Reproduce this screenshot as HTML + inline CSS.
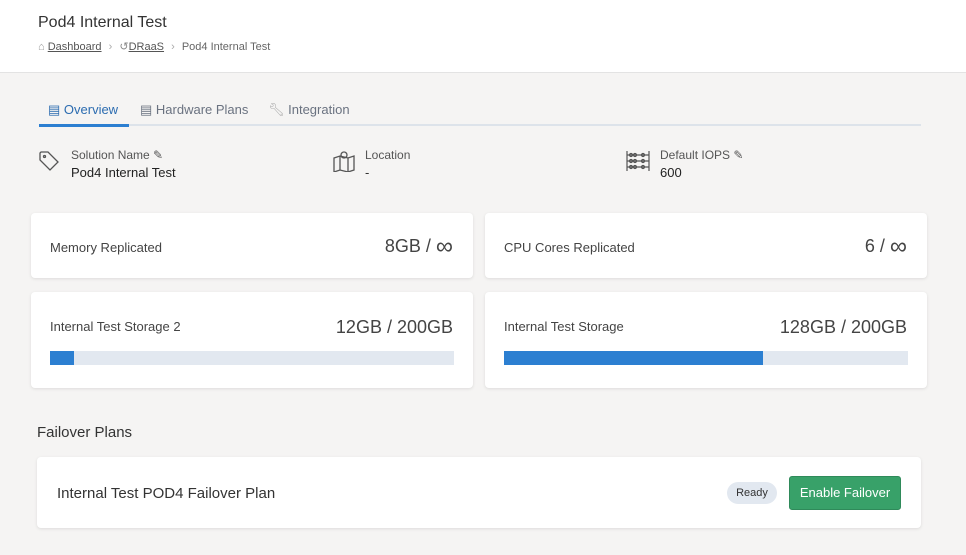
<!DOCTYPE html>
<html><head><style>
*{box-sizing:border-box;margin:0;padding:0}
body{width:966px;height:555px;background:#f5f4f3;font-family:"Liberation Sans",sans-serif;color:#333;position:relative;overflow:hidden}
.hdr{position:absolute;left:0;top:0;width:966px;height:73px;background:#fff;border-bottom:1px solid #e3e3e3}
.abs{position:absolute}
.card{position:absolute;background:#fff;border-radius:4px;box-shadow:0 1px 3px rgba(0,0,0,.1)}
.lbl{font-size:13px;color:#444}
.big{font-size:18px;color:#444;position:absolute;right:20px}
.inf{font-size:24px;line-height:18px;vertical-align:-2px}
.bar{position:absolute;left:19px;right:19px;height:14px;background:#e2e8f0}
.bar div{height:100%;background:#2c7fd1}
.sm{font-size:12px;color:#555}
</style></head><body>
<div class="hdr">
<div class="abs" style="left:38px;top:14px;font-size:16px;color:#333">Pod4 Internal Test</div>
<div class="abs" style="left:38px;top:40px;font-size:11px;color:#666;white-space:nowrap">
<span style="color:#999">⌂</span> <u style="color:#555">Dashboard</u> <span style="color:#aaa;margin:0 4px">›</span> <span style="color:#888">↺</span><u style="color:#555">DRaaS</u> <span style="color:#aaa;margin:0 4px">›</span> Pod4 Internal Test</div>
</div>
<div class="abs" style="left:39px;top:124px;width:882px;height:2px;background:#dde3ea"></div>
<div class="abs" style="left:39px;top:124px;width:90px;height:3px;background:#2c7fd1"></div>
<div class="abs" style="left:48px;top:102px;font-size:13px;color:#2c6cb0;white-space:nowrap">▤ Overview</div>
<div class="abs" style="left:140px;top:102px;font-size:13px;color:#6a7280;white-space:nowrap">▤ Hardware Plans</div>
<div class="abs" style="left:268px;top:102px;font-size:13px;color:#6a7280;white-space:nowrap"><span style="color:#aaa">🔧︎</span> Integration</div>

<svg class="abs" style="left:38px;top:150px" width="22" height="22" viewBox="0 0 22 22" fill="none" stroke="#555" stroke-width="1.3"><path d="M2 3v7l10 10 8-8L10 2H3z"/><circle cx="6.5" cy="6.5" r="1"/></svg>
<div class="abs sm" style="left:71px;top:148px">Solution Name ✎</div>
<div class="abs" style="left:71px;top:165px;font-size:13px;color:#222">Pod4 Internal Test</div>
<svg class="abs" style="left:332px;top:150px" width="24" height="22" viewBox="0 0 24 22" fill="none" stroke="#555" stroke-width="1.3"><path d="M2 8l6-2 8 2 6-2v14l-6 2-8-2-6 2z M8 6v14 M16 8v14"/><circle cx="12" cy="5" r="3"/></svg>
<div class="abs sm" style="left:365px;top:148px">Location</div>
<div class="abs" style="left:365px;top:165px;font-size:13px">-</div>
<svg class="abs" style="left:626px;top:150px" width="24" height="22" viewBox="0 0 24 22" fill="none" stroke="#555" stroke-width="1.2"><path d="M1 1v20M23 1v20M1 5h22M1 11h22M1 17h22"/><circle cx="5" cy="5" r="1.5"/><circle cx="9" cy="5" r="1.5"/><circle cx="5" cy="11" r="1.5"/><circle cx="9" cy="11" r="1.5"/><circle cx="5" cy="17" r="1.5"/><circle cx="9" cy="17" r="1.5"/><circle cx="17" cy="5" r="1.5"/><circle cx="17" cy="11" r="1.5"/><circle cx="17" cy="17" r="1.5"/></svg>
<div class="abs sm" style="left:660px;top:148px">Default IOPS ✎</div>
<div class="abs" style="left:660px;top:165px;font-size:13px;color:#222">600</div>

<div class="card" style="left:31px;top:213px;width:442px;height:65px"><div class="abs lbl" style="left:19px;top:27px">Memory Replicated</div><div class="big" style="top:23px">8GB / <span class="inf">∞</span></div></div>
<div class="card" style="left:485px;top:213px;width:442px;height:65px"><div class="abs lbl" style="left:19px;top:27px">CPU Cores Replicated</div><div class="big" style="top:23px">6 / <span class="inf">∞</span></div></div>
<div class="card" style="left:31px;top:292px;width:442px;height:96px"><div class="abs lbl" style="left:19px;top:27px">Internal Test Storage 2</div><div class="big" style="top:25px">12GB / 200GB</div><div class="bar" style="top:59px"><div style="width:6%"></div></div></div>
<div class="card" style="left:485px;top:292px;width:442px;height:96px"><div class="abs lbl" style="left:19px;top:27px">Internal Test Storage</div><div class="big" style="top:25px">128GB / 200GB</div><div class="bar" style="top:59px"><div style="width:64%"></div></div></div>

<div class="abs" style="left:37px;top:424px;font-size:15px;color:#333">Failover Plans</div>
<div class="card" style="left:37px;top:457px;width:884px;height:71px">
<div class="abs" style="left:20px;top:28px;font-size:15px;color:#333">Internal Test POD4 Failover Plan</div>
<div class="abs" style="left:690px;top:25px;width:50px;height:22px;border-radius:11px;background:#e2e8f0;font-size:11px;text-align:center;line-height:22px;color:#333">Ready</div>
<div class="abs" style="left:752px;top:19px;width:112px;height:34px;border-radius:3px;background:#38a169;border:1px solid #2f8a5a;color:#fff;font-size:13px;text-align:center;line-height:32px">Enable Failover</div>
</div>
</body></html>
